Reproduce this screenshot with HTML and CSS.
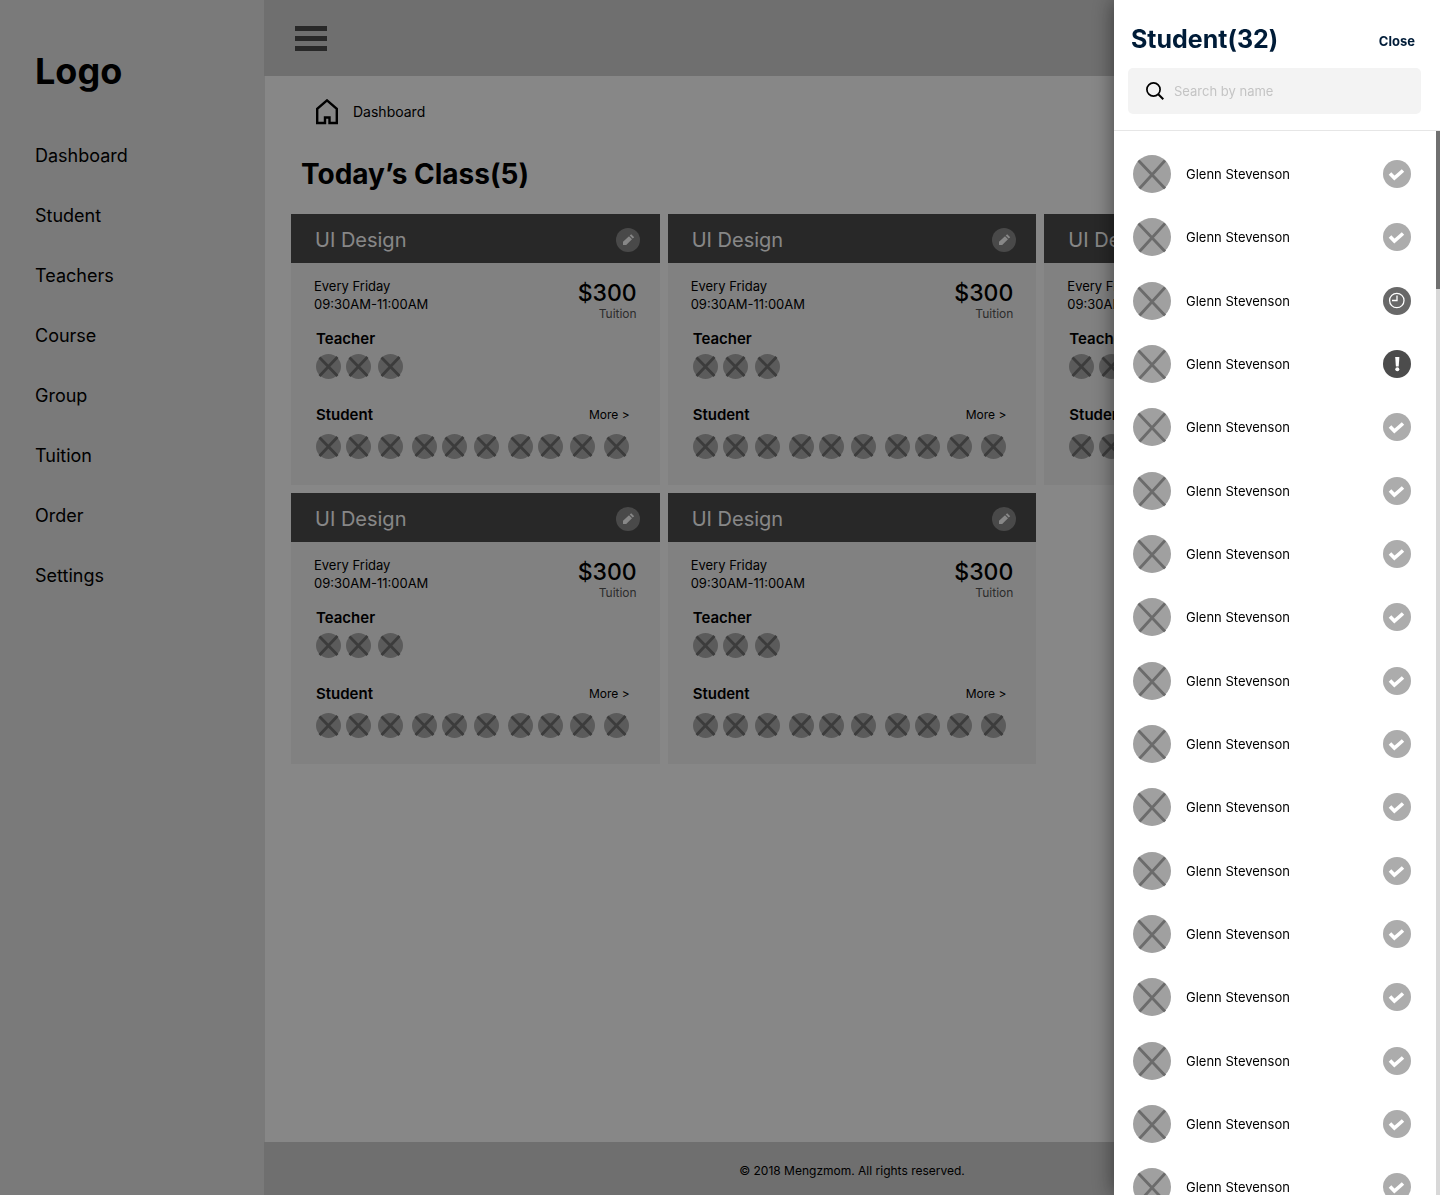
FILE: index.html
```html
<!DOCTYPE html>
<html lang="en">
<head>
<meta charset="utf-8">
<meta name="viewport" content="width=device-width, initial-scale=1">
<title>Dashboard</title>
<link rel="stylesheet" href="styles.css">
</head>
<body>
<svg class="sprite" aria-hidden="true">
  <symbol id="avatar" viewBox="0 0 38 38"><circle cx="19" cy="19" r="19" fill="#a0a0a0"/><path d="M5.500 5.500 32 33.500M32 5.500 6.500 33.500" stroke="#6b6b6b" stroke-width="2.800" fill="none"/></symbol>
  <symbol id="avatar-small" viewBox="0 0 25 25"><circle cx="12.500" cy="12.500" r="12.500" fill="#acacac"/><path d="M3.500 3.500 21.500 22M21.500 3 3.500 22" stroke="#717171" stroke-width="2.800" fill="none"/></symbol>
  <symbol id="present" viewBox="0 0 28 28"><circle cx="14" cy="14" r="14" fill="#acacac"/><path d="M7 13.500 11.400 18 20 10.500" stroke="#fff" stroke-width="3.600" fill="none"/></symbol>
  <symbol id="late" viewBox="0 0 28 28"><circle cx="14" cy="14" r="14" fill="#686868"/><circle cx="13.800" cy="13.500" r="7.200" stroke="#fff" stroke-width="1.300" fill="none"/><path d="M14 8.500V13.500H9" stroke="#fff" stroke-width="1.300" fill="none"/></symbol>
  <symbol id="absent" viewBox="0 0 28 28"><circle cx="14" cy="14" r="14" fill="#4c4c4c"/><path d="M12.200 7h4.200l-.7 9.500h-2.800z" fill="#fff"/><circle cx="14.300" cy="19.300" r="2" fill="#fff"/></symbol>
  <symbol id="pencil" viewBox="0 0 24 24"><circle cx="12" cy="12" r="12" fill="#8a8a8a"/><path d="M7 17v-3.200l6-5.600 3 3-5.800 5.800zM13.700 7.600l1.500-1.300 3 3-1.500 1.300z" fill="#fff"/></symbol>
</svg>

<div class="page">
  <aside class="sidebar">
    <div class="logo">Logo</div>
    <nav class="nav">
      <a href="#">Dashboard</a>
      <a href="#">Student</a>
      <a href="#">Teachers</a>
      <a href="#">Course</a>
      <a href="#">Group</a>
      <a href="#">Tuition</a>
      <a href="#">Order</a>
      <a href="#">Settings</a>
    </nav>
  </aside>
  <div class="content">
    <header class="topbar">
      <button class="menu" type="button" aria-label="Menu"><span></span><span></span><span></span></button>
    </header>
    <main class="main">
      <a class="crumb" href="#">
        <svg width="22" height="26" viewBox="0 0 22 26" aria-hidden="true"><path d="M1.200 24V9.800L11 1.400l9.800 8.400V24h-7.300v-5.500h-4.500V24z" fill="none" stroke="#000" stroke-width="2.400"/></svg>
        Dashboard
      </a>
      <h1 class="title">Today’s Class(5)</h1>
      <div class="cards" id="cards"></div>
    </main>
    <footer class="footer">© 2018 Mengzmom. All rights reserved.</footer>
  </div>
</div>

<div class="backdrop"></div>

<aside class="drawer" aria-label="Students">
  <div class="drawer-head">
    <div class="drawer-bar">
      <h2>Student(32)</h2>
      <button class="close" type="button">Close</button>
    </div>
    <label class="search">
      <svg width="20" height="20" viewBox="0 0 20 20" aria-hidden="true"><circle cx="8.500" cy="8.500" r="6.600" fill="none" stroke="#000" stroke-width="1.700"/><path d="M13 13 18.300 18.300" stroke="#000" stroke-width="2"/></svg>
      <input type="text" placeholder="Search by name" aria-label="Search by name">
    </label>
  </div>
  <div class="drawer-body">
    <ul class="students" id="students"></ul>
    <div class="scroll"><div class="thumb"></div></div>
  </div>
</aside>
<script src="app.js"></script>
</body>
</html>
```
FILE: styles.css
```css
* { box-sizing: border-box; }
body { margin: 0; font-family: Inter, "Liberation Sans", sans-serif; color: #000; background: #fff; }
h1, h2, h3, p, ul { margin: 0; padding: 0; }
ul { list-style: none; }
a { color: inherit; text-decoration: none; }
button { border: 0; padding: 0; background: none; font: inherit; color: inherit; cursor: pointer; }
svg { display: block; flex: none; }
.sprite { position: absolute; width: 0; height: 0; }

.page { display: flex; min-height: 100vh; }
.sidebar { flex: none; width: 264px; padding: 48px 35px; background: #e6e6e6; }
.logo { font-size: 36px; line-height: 46px; font-weight: 700; }
.nav { display: flex; flex-direction: column; margin-top: 32px; font-size: 18px; line-height: 60px; }

.content { flex: 1; min-width: 0; display: flex; flex-direction: column; }
.topbar { display: flex; align-items: center; height: 76px; padding: 0 31px; background: #d1d1d1; }
.menu { display: flex; flex-direction: column; gap: 5px; width: 32px; }
.menu span { height: 5px; background: #4c4c4c; }
.main { flex: 1; padding: 22px 27px 22px 26px; border-left: 1px solid #e6e6e6; }
.crumb { display: flex; align-items: center; gap: 15px; padding-left: 25px; font-size: 14px; line-height: 28px; }
.title { margin: 28px 0 20px; padding-left: 10px; font-size: 28px; line-height: 40px; font-weight: 700; }
.footer { height: 53px; padding-top: 4px; background: #d1d1d1; text-align: center; font-size: 12px; line-height: 50px; }

.cards { display: grid; grid-template-columns: repeat(3, 1fr); gap: 8px; }
.card { background: #f4f4f4; }
.card-head { display: flex; align-items: center; justify-content: space-between; height: 49px; padding: 2px 20px 0 24px; background: #4c4c4c; color: #fff; }
.card-head h2 { font-size: 20px; line-height: 28px; font-weight: 400; }
.card-body { padding: 14px 23px 0; }
.info { display: flex; justify-content: space-between; font-size: 13px; line-height: 18px; }
.price { text-align: right; font-size: 12px; color: #555; }
.price strong { display: block; padding-top: 4px; font-size: 23px; line-height: 24px; font-weight: 500; color: #000; }
.section { display: flex; justify-content: space-between; padding: 0 7px 0 2px; line-height: 20px; font-size: 12px; }
.section h3 { font-size: 15px; font-weight: 600; }
.info + .section { margin-top: 6px; }
.people { display: flex; gap: 5px; padding: 5px 0 26px 2px; }
.people svg:nth-child(3n) { margin-left: 2px; }
.people svg:nth-child(3n + 4) { margin-left: 4px; }
.people.wide { padding-top: 9px; }

.backdrop { position: fixed; inset: 0; background: rgba(0, 0, 0, .47); }
.drawer { position: fixed; top: 0; right: 0; bottom: 0; width: 326px; display: flex; flex-direction: column; background: #fff; box-shadow: 0 0 20px rgba(0, 0, 0, .5); overflow: hidden; }
.drawer-head { padding: 22px 19px 16px 14px; border-bottom: 1px solid #e6e6e6; }
.drawer-bar { display: flex; align-items: center; justify-content: space-between; padding: 0 6px 12px 3px; color: #001c38; }
.drawer-bar h2 { font-size: 25px; line-height: 34px; font-weight: 700; }
.close { padding-top: 4px; font-size: 13px; line-height: 18px; font-weight: 700; }
.search { display: flex; align-items: center; gap: 9px; height: 46px; padding: 0 17px; border-radius: 5px; background: #f3f3f3; }
.search input { flex: 1; min-width: 0; padding: 0; border: 0; outline: 0; background: none; font: 13px/18px Inter, "Liberation Sans", sans-serif; }
.search input::placeholder { color: #c4c4c4; opacity: 1; }
.drawer-body { position: relative; flex: 1; min-height: 0; overflow: hidden; }
.students { padding: 11px 29px 0 19px; }
.students li { display: flex; align-items: center; gap: 15px; height: 63px; font-size: 13px; }
.students li:nth-child(3n) { margin-top: 1px; }
.students span { flex: 1; }
.scroll { position: absolute; top: 0; right: 0; bottom: 0; width: 4px; background: #d8d8d8; }
.thumb { height: 158px; background: #707070; }
```
FILE: app.js
```js
const icon = (name, size) =>
  `<svg width="${size}" height="${size}" aria-hidden="true"><use href="#${name}"></use></svg>`;

const classes = Array.from({ length: 5 }, () => ({
  name: "UI Design", day: "Every Friday", time: "09:30AM-11:00AM", price: "$300", teachers: 3, students: 10
}));

document.getElementById("cards").innerHTML = classes.map(c => `
  <article class="card">
    <div class="card-head"><h2>${c.name}</h2><button type="button" aria-label="Edit">${icon("pencil", 24)}</button></div>
    <div class="card-body">
      <div class="info">
        <div><p>${c.day}</p><p>${c.time}</p></div>
        <div class="price"><strong>${c.price}</strong>Tuition</div>
      </div>
      <div class="section"><h3>Teacher</h3></div>
      <div class="people">${icon("avatar-small", 25).repeat(c.teachers)}</div>
      <div class="section"><h3>Student</h3><a href="#">More &gt;</a></div>
      <div class="people wide">${icon("avatar-small", 25).repeat(c.students)}</div>
    </div>
  </article>`).join("");

const attendance = ["present", "present", "late", "absent", ...Array(13).fill("present")];

document.getElementById("students").innerHTML = attendance.map(state => `
  <li>${icon("avatar", 38)}<span>Glenn Stevenson</span>${icon(state, 28)}</li>`).join("");
```
